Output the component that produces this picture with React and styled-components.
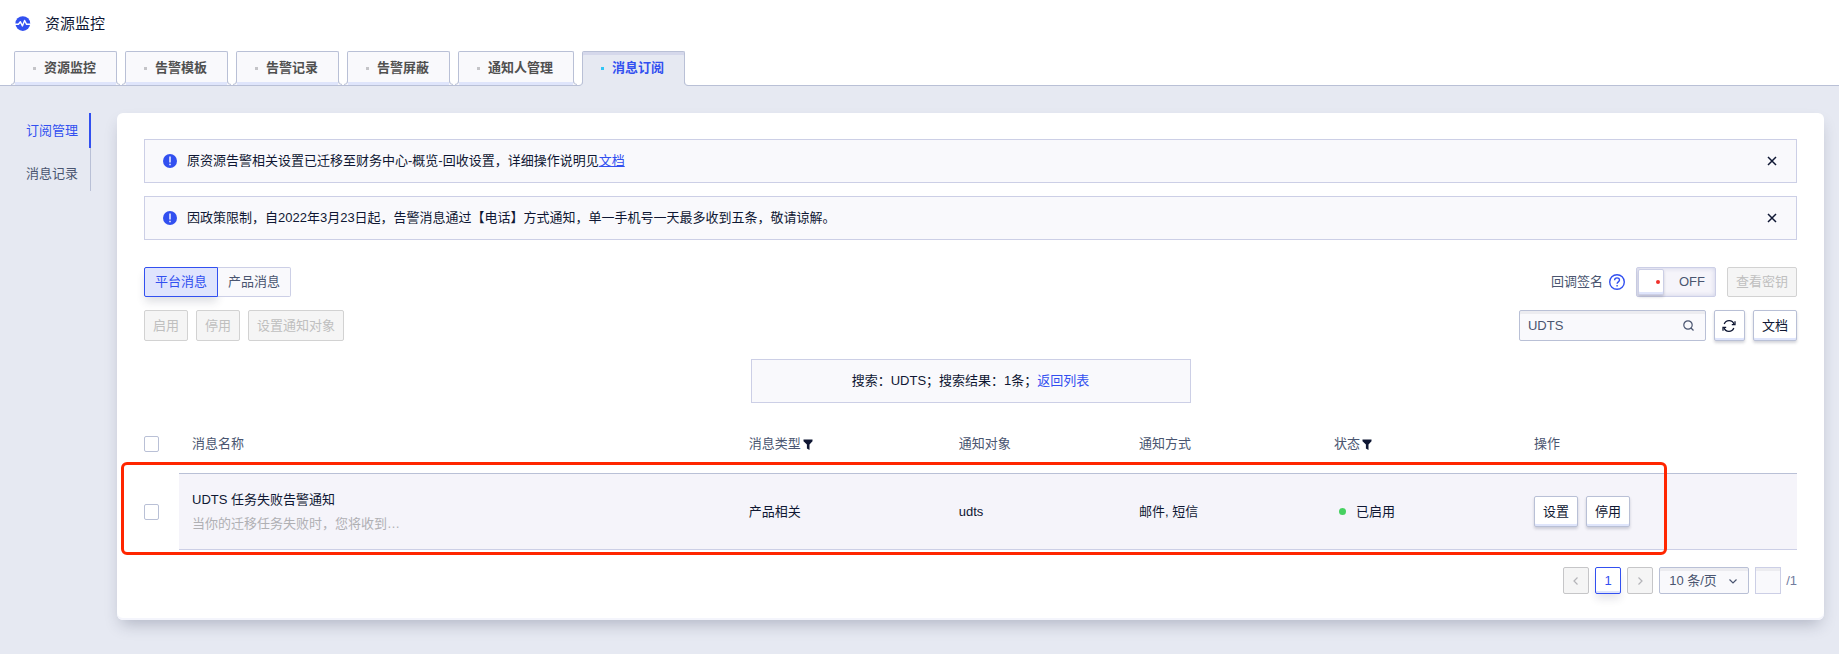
import React, { useState } from 'react';
import styled, { createGlobalStyle, css } from 'styled-components';

const c = {
  ink: '#0f1733',
  text: '#4a5570',
  blue: '#3250f0',
  line: '#b9c0d6',
  soft: '#cccfe6',
  panel: '#f9f9fc',
  page: '#e6e9f2',
};

const Global = createGlobalStyle`
  *, *::before, *::after { box-sizing: border-box; }
  html, body { margin: 0; min-height: 100%; background: ${c.page}; }
  body, button, input, select {
    font-family: "Liberation Sans", "Noto Sans CJK SC", sans-serif;
    font-size: 13px;
    line-height: 20px;
    color: ${c.ink};
  }
  button { margin: 0; padding: 0; background: none; border: 0; cursor: pointer; white-space: nowrap; }
  svg { display: block; }
`;

const Header = styled.header`
  background: #fff;
  border-bottom: 1px solid ${c.line};
  padding: 12px 14px 0;
`;
const TitleRow = styled.div`
  display: flex;
  align-items: center;
  gap: 14px;
  height: 24px;
  margin-bottom: 15px;
`;
const Title = styled.h1`
  margin: 0;
  font-size: 15px;
  line-height: 24px;
  font-weight: 400;
`;
const Tabs = styled.nav`
  display: flex;
  gap: 8px;
`;
const Tab = styled.a`
  position: relative;
  display: flex;
  align-items: center;
  gap: 8px;
  height: 34px;
  padding: 0 20px 1px 18px;
  border: 1px solid ${c.line};
  border-bottom: 0;
  border-radius: 2px 2px 0 0;
  background: ${c.panel};
  box-shadow: inset 0 -3px #dfe5fb;
  color: #505050;
  font-weight: 700;
  text-decoration: none;
  white-space: nowrap;
  &::before {
    content: '';
    width: 3px;
    height: 3px;
    background: #c4c4c8;
  }
  ${(p) => p.$active && css`
    height: 35px;
    margin-bottom: -1px;
    padding-bottom: 2px;
    background: ${c.page};
    box-shadow: inset 0 3px #d5d8eb;
    color: ${c.blue};
    &::before { background: #30c5f5; }
  `}
`;
const Foot = styled.svg`
  position: absolute;
  bottom: 0;
  ${(p) => (p.$side === 'left' ? 'left: -4px;' : 'right: -4px; transform: scaleX(-1);')}
`;

const Main = styled.div`
  display: flex;
  align-items: flex-start;
  padding: 27px 15px 34px 0;
`;
const Side = styled.nav`
  flex: none;
  display: flex;
  flex-direction: column;
  gap: 8px;
  width: 91px;
  margin-right: 26px;
  border-right: 1px solid ${c.line};
`;
const SideLink = styled.a`
  height: 35px;
  padding-left: 26px;
  margin-right: -1px;
  line-height: 35px;
  text-decoration: none;
  color: ${(p) => (p.$active ? c.blue : c.text)};
  border-right: 2px solid ${(p) => (p.$active ? c.blue : 'transparent')};
`;
const Card = styled.main`
  flex: 1;
  min-width: 0;
  padding: 26px 27px;
  background: #fff;
  border-radius: 6px;
  box-shadow: inset 0 -2px #f4f5fc, 0 8px 16px -4px rgba(40, 45, 75, 0.28);
`;

const Notice = styled.div`
  display: flex;
  align-items: center;
  gap: 10px;
  height: 44px;
  margin-bottom: 13px;
  padding: 0 18px;
  border: 1px solid ${c.soft};
  background: ${c.panel};
`;
const NoticeText = styled.p`
  flex: 1;
  margin: 0;
`;
const TextLink = styled.a`
  color: ${c.blue};
  text-decoration: ${(p) => (p.$underline ? 'underline' : 'none')};
`;
const CloseButton = styled.button`
  display: grid;
  place-items: center;
  width: 12px;
  height: 12px;
`;

const Toolbar = styled.div`
  display: flex;
  align-items: center;
  justify-content: space-between;
  margin-top: ${(p) => p.$top}px;
`;
const Group = styled.div`
  display: flex;
  align-items: center;
  gap: ${(p) => p.$gap}px;
`;
const Segment = styled.button`
  height: 30px;
  padding: 0 10px;
  border: 1px solid ${c.soft};
  border-left-width: 0;
  border-radius: 0 2px 2px 0;
  background: ${c.panel};
  color: ${c.text};
  ${(p) => p.$active && css`
    border: 1px solid ${c.blue};
    border-radius: 2px 0 0 2px;
    background: #dfe4fd;
    color: ${c.blue};
    box-shadow: 0 6px 8px -1px rgba(40, 45, 75, 0.15);
  `}
`;
const Button = styled.button`
  display: inline-grid;
  place-items: center;
  height: 31px;
  min-width: 31px;
  padding: 0 ${(p) => (p.$square ? 0 : 8)}px;
  border: 1px solid ${c.line};
  border-radius: 2px;
  background: #fff;
  box-shadow: inset 0 -2px #dfe5fb, 0 2px 3px rgba(40, 45, 75, 0.2);
  &:disabled {
    border-color: #d2d2d2;
    background: #f5f5f5;
    box-shadow: none;
    color: #bfbfbf;
    cursor: default;
  }
`;
const KeyButton = styled(Button)`
  height: 30px;
`;

const FieldLabel = styled.span`
  display: flex;
  align-items: center;
  gap: 6px;
  color: ${c.text};
`;
const Switch = styled.label`
  position: relative;
  display: flex;
  align-items: center;
  gap: 15px;
  width: 80px;
  height: 30px;
  padding: 1px;
  border: 1px solid ${c.soft};
  border-radius: 2px;
  background: #f5f4fa;
  box-shadow: inset 0 0 5px #cccfe6;
  color: ${c.text};
  input {
    position: absolute;
    inset: 0;
    width: 100%;
    height: 100%;
    margin: 0;
    opacity: 0;
  }
`;
const Knob = styled.span`
  display: flex;
  align-items: center;
  justify-content: flex-end;
  width: 26px;
  height: 26px;
  padding-right: 3px;
  border: 1px solid ${c.soft};
  border-radius: 2px;
  background: #fff;
  box-shadow: inset 0 -2px #dfe5fb, 0 2px 3px rgba(40, 45, 75, 0.2);
`;
const Dot = styled.span`
  flex: none;
  width: ${(p) => p.$size}px;
  height: ${(p) => p.$size}px;
  border-radius: 50%;
  background: ${(p) => p.$color};
`;

const SearchBox = styled.label`
  display: flex;
  align-items: center;
  width: 187px;
  height: 31px;
  padding: 0 11px 0 8px;
  border: 1px solid ${c.line};
  border-radius: 2px;
  background: ${c.panel};
  box-shadow: inset 0 3px #ececf0;
  input {
    flex: 1;
    min-width: 0;
    padding: 0;
    border: 0;
    outline: 0;
    background: none;
    color: ${c.text};
  }
`;
const ResultBar = styled.div`
  width: 440px;
  max-width: 100%;
  margin: 18px auto 13px;
  padding: 11px 0;
  border: 1px solid ${c.soft};
  background: ${c.panel};
  text-align: center;
`;

const TableWrap = styled.div`
  position: relative;
`;
const Table = styled.table`
  width: 100%;
  table-layout: fixed;
  border-collapse: separate;
  border-spacing: 0;
  th, td { padding: 0 0 0 13px; text-align: left; font-weight: 400; }
  th { height: 57px; padding-bottom: 1px; color: ${c.text}; }
  td {
    height: 77px;
    border-top: 1px solid ${c.line};
    border-bottom: 1px solid ${c.soft};
    background: #f5f4fa;
  }
  th:first-child, td:first-child {
    padding-left: 0;
    border-color: transparent;
    background: none;
  }
`;
const Col = styled.col`
  width: ${(p) => p.$width};
`;
const Check = styled.input`
  appearance: none;
  display: block;
  width: 15px;
  height: 16px;
  margin: 0;
  border: 1px solid ${c.line};
  border-radius: 2px;
  background: #fff;
`;
const HeadLabel = styled.span`
  display: flex;
  align-items: center;
  gap: 2px;
`;
const Name = styled.div`
  line-height: 24px;
`;
const Summary = styled(Name)`
  color: #b0b0b4;
`;
const Status = styled.span`
  display: flex;
  align-items: center;
  gap: 10px;
  padding-left: 5px;
`;
const Highlight = styled.div`
  position: absolute;
  top: 46px;
  bottom: -5px;
  left: -23px;
  right: 130px;
  border: 3px solid #ff2600;
  border-radius: 6px;
  pointer-events: none;
`;

const Pager = styled.div`
  display: flex;
  align-items: center;
  justify-content: flex-end;
  gap: 6px;
  margin-top: 17px;
  color: #727b9e;
`;
const PageButton = styled.button`
  display: grid;
  place-items: center;
  width: 26px;
  height: 27px;
  border: 1px solid ${c.blue};
  border-radius: 2px;
  background: #fff;
  color: ${c.blue};
  box-shadow: inset 0 -2px #dfe5fb, 0 6px 8px -1px rgba(40, 45, 75, 0.12);
  &:disabled {
    border-color: #c6c6c8;
    background: #f5f5f5;
    box-shadow: none;
    color: #b4b4b8;
  }
`;
const SelectBox = styled.div`
  display: grid;
  align-items: center;
  width: 90px;
  select, svg { grid-area: 1 / 1; }
  select {
    appearance: none;
    width: 100%;
    height: 27px;
    padding: 0 0 0 9px;
    border: 1px solid ${c.line};
    border-radius: 2px;
    background: ${c.panel};
    box-shadow: inset 0 3px #ececf0;
    color: ${c.text};
  }
  svg { justify-self: end; margin-right: 12px; pointer-events: none; }
`;
const PageJump = styled.label`
  display: flex;
  align-items: center;
  gap: 5px;
  input {
    width: 26px;
    height: 27px;
    padding: 0 4px;
    border: 1px solid ${c.soft};
    background: ${c.panel};
    box-shadow: inset 0 3px #ececf0;
  }
`;

const Stroke = ({ size, d, color = 'currentColor', width = 1.2, children }) => (
  <svg width={size} height={size} viewBox={`0 0 ${size} ${size}`} fill="none" stroke={color} strokeWidth={width} aria-hidden="true">
    {d && <path d={d} />}
    {children}
  </svg>
);
const LogoIcon = () => (
  <svg width="17" height="16" viewBox="0 0 17 16" aria-hidden="true">
    <circle cx="8.8" cy="7.6" r="7.4" fill={c.blue} />
    <path d="M1 8.3h3.4l2-2.6 2 4.2 2.2-5.4 2 3.8h4" fill="none" stroke="#fff" strokeWidth="1.4" strokeLinejoin="round" />
  </svg>
);
const InfoIcon = () => (
  <svg width="14" height="14" viewBox="0 0 14 14" aria-hidden="true">
    <circle cx="7" cy="7" r="7" fill={c.blue} />
    <path d="M7 2.6v5.8M7 9.8v1.5" stroke="#fff" strokeWidth="1.4" />
  </svg>
);
const HelpIcon = () => (
  <Stroke size={16} color={c.blue} width={1.4}>
    <circle cx="8" cy="8" r="7.3" />
    <path d="M5.6 6.3c0-3.2 4.9-3.2 4.9-.2 0 1.8-2.4 1.8-2.4 3.7M8.1 11.1v1.5" />
  </Stroke>
);
const FilterIcon = () => (
  <svg width="10" height="11" viewBox="0 0 10 11" aria-hidden="true">
    <path d="M.5 .5h9v1.8L6.5 5.6V11l-2.6-1.4V5.6L.5 2.3z" fill={c.ink} />
  </svg>
);
const RefreshIcon = () => (
  <Stroke size={14} color={c.ink} width={1.3}>
    <path d="M2.2 5A5.2 5.2 0 0 1 12 5.2M11.8 9A5.2 5.2 0 0 1 2 8.8" />
    <path d="M13 2.2V5.6H9.8M1 11.8V8.4h3.2" />
  </Stroke>
);

function TabFeet({ active }) {
  return ['left', 'right'].map((side) => (
    <Foot key={side} $side={side} width="4" height="4" viewBox="0 0 4 4" aria-hidden="true">
      <path d="M4 0Q3.5 3.5 0 3.5V4H4z" fill={active ? c.page : c.panel} />
      <path d="M3.5 0Q3.5 3.5 0 3.5" fill="none" stroke={c.line} />
    </Foot>
  ));
}

function NoticeBar({ children }) {
  return (
    <Notice>
      <InfoIcon />
      <NoticeText>{children}</NoticeText>
      <CloseButton aria-label="关闭">
        <Stroke size={10} d="M1 1l8 8M9 1L1 9" width={1.5} />
      </CloseButton>
    </Notice>
  );
}

const tabs = ['资源监控', '告警模板', '告警记录', '告警屏蔽', '通知人管理', '消息订阅'];
const columns = [
  { label: '消息名称' },
  { label: '消息类型', width: '12.7%', filter: true },
  { label: '通知对象', width: '10.9%' },
  { label: '通知方式', width: '11.8%' },
  { label: '状态', width: '12.1%', filter: true },
  { label: '操作', width: '16.7%' },
];

export default function App() {
  const [query, setQuery] = useState('UDTS');
  return (
    <>
      <Global />
      <Header>
        <TitleRow>
          <LogoIcon />
          <Title>资源监控</Title>
        </TitleRow>
        <Tabs>
          {tabs.map((label) => {
            const active = label === '消息订阅';
            return (
              <Tab key={label} href="#" $active={active}>
                {label}
                <TabFeet active={active} />
              </Tab>
            );
          })}
        </Tabs>
      </Header>
      <Main>
        <Side>
          <SideLink href="#" $active>订阅管理</SideLink>
          <SideLink href="#">消息记录</SideLink>
        </Side>
        <Card>
          <NoticeBar>
            原资源告警相关设置已迁移至财务中心-概览-回收设置，详细操作说明见<TextLink href="#" $underline>文档</TextLink>
          </NoticeBar>
          <NoticeBar>因政策限制，自2022年3月23日起，告警消息通过【电话】方式通知，单一手机号一天最多收到五条，敬请谅解。</NoticeBar>
          <Toolbar $top={27}>
            <Group $gap={0}>
              <Segment $active>平台消息</Segment>
              <Segment>产品消息</Segment>
            </Group>
            <Group $gap={11}>
              <FieldLabel>回调签名<HelpIcon /></FieldLabel>
              <Switch>
                <input type="checkbox" role="switch" aria-label="回调签名" />
                <Knob><Dot $size={4} $color="#f0302a" /></Knob>
                OFF
              </Switch>
              <KeyButton disabled>查看密钥</KeyButton>
            </Group>
          </Toolbar>
          <Toolbar $top={13}>
            <Group $gap={8}>
              <Button disabled>启用</Button>
              <Button disabled>停用</Button>
              <Button disabled>设置通知对象</Button>
            </Group>
            <Group $gap={8}>
              <SearchBox>
                <input type="text" aria-label="搜索" value={query} onChange={(e) => setQuery(e.target.value)} />
                <Stroke size={11} color={c.text}>
                  <circle cx="5" cy="5" r="4.2" />
                  <path d="M8 8l2.5 2.5" />
                </Stroke>
              </SearchBox>
              <Button $square aria-label="刷新"><RefreshIcon /></Button>
              <Button>文档</Button>
            </Group>
          </Toolbar>
          <ResultBar>
            搜索：UDTS；搜索结果：1条；<TextLink href="#">返回列表</TextLink>
          </ResultBar>
          <TableWrap>
            <Table>
              <colgroup>
                <Col $width="35px" />
                {columns.map((col) => <Col key={col.label} $width={col.width || 'auto'} />)}
              </colgroup>
              <thead>
                <tr>
                  <th><Check type="checkbox" aria-label="全选" /></th>
                  {columns.map((col) => (
                    <th key={col.label}>
                      <HeadLabel>{col.label}{col.filter && <FilterIcon />}</HeadLabel>
                    </th>
                  ))}
                </tr>
              </thead>
              <tbody>
                <tr>
                  <td><Check type="checkbox" aria-label="UDTS 任务失败告警通知" /></td>
                  <td>
                    <Name>UDTS 任务失败告警通知</Name>
                    <Summary>当你的迁移任务失败时，您将收到…</Summary>
                  </td>
                  <td>产品相关</td>
                  <td>udts</td>
                  <td>邮件, 短信</td>
                  <td><Status><Dot $size={7} $color="#46d160" />已启用</Status></td>
                  <td>
                    <Group $gap={8}>
                      <Button>设置</Button>
                      <Button>停用</Button>
                    </Group>
                  </td>
                </tr>
              </tbody>
            </Table>
            <Highlight />
          </TableWrap>
          <Pager>
            <PageButton disabled aria-label="上一页"><Stroke size={8} d="M5.5 .5L2 4l3.5 3.5" /></PageButton>
            <PageButton>1</PageButton>
            <PageButton disabled aria-label="下一页"><Stroke size={8} d="M2.5 .5L6 4 2.5 7.5" /></PageButton>
            <SelectBox>
              <select aria-label="每页条数"><option>10 条/页</option></select>
              <Stroke size={8} color={c.text} d="M.5 2.5L4 6l3.5-3.5" />
            </SelectBox>
            <PageJump><input type="text" aria-label="页码" />/1</PageJump>
          </Pager>
        </Card>
      </Main>
    </>
  );
}
